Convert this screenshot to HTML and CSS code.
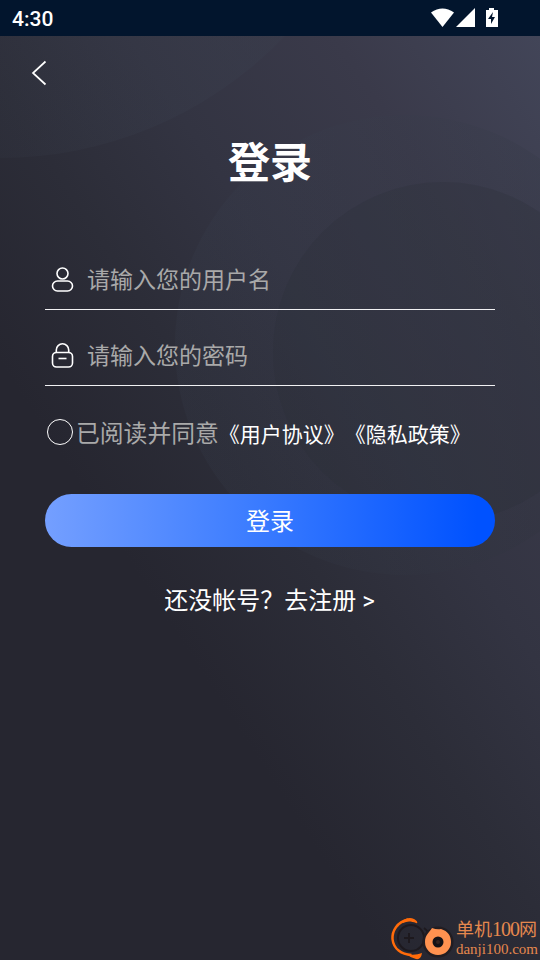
FILE: index.html
```html
<!DOCTYPE html>
<html lang="zh-CN">
<head>
<meta charset="utf-8">
<title>登录</title>
<link rel="stylesheet" href="styles.css">
</head>
<body>
<header class="status">
  <span class="clock">4:30</span>
  <svg class="status-icons" width="68" height="20" viewBox="0 0 68 20" fill="#fff"><path d="M0 4.4Q11.5-3.6 23 4.4L11.5 19Z"/><path d="M44 0V19H25Z"/><path d="M58 0h5v2h4v17H55V2h3Z"/><path d="m62 4-5 7h3v5l4-7h-3Z" fill="#02152d"/></svg>
</header>
<main class="page">
  <svg class="backdrop" viewBox="0 0 540 924" aria-hidden="true">
    <defs><linearGradient id="halo" x1="0" y1="0.4" x2="1" y2="0.6"><stop offset="0" stop-color="#3c4455" stop-opacity=".16"/><stop offset=".5" stop-color="#353b48" stop-opacity=".18"/><stop offset="1" stop-color="#2b2f38" stop-opacity=".25"/></linearGradient>
    <linearGradient id="wave" x1="0" x2="1"><stop offset=".5" stop-color="#3d4452" stop-opacity=".12"/><stop offset=".9" stop-color="#3a3f4e" stop-opacity=".35"/></linearGradient></defs>
    <circle fill="url(#wave)" cx="0" cy="-272" r="394"/>
    <circle fill="url(#halo)" cx="405" cy="309" r="230"/>
    <circle class="shade" cx="443" cy="316" r="170"/>
  </svg>
  <nav class="nav"><svg class="back" width="16" height="26" viewBox="0 0 16 26"><path d="M14.500 1.500 2 13l12.500 11.500"/></svg></nav>
  <h1 class="title">登录</h1>
  <form class="form">
    <label class="field">
      <svg class="icon" width="24" height="26" viewBox="0 0 24 26"><circle cx="11.500" cy="6.500" r="5.500"/><rect x="1.500" y="14" width="20" height="10" rx="5"/></svg>
      <span class="hint">请输入您的用户名</span>
    </label>
    <label class="field">
      <svg class="icon" width="24" height="26" viewBox="0 0 24 26"><path d="M5.300 9.500V7a6.200 6.200 0 0 1 12.400 0v2.500"/><rect x="1.500" y="9.500" width="20" height="14.500" rx="4"/><path d="M7.500 15.500h8"/></svg>
      <span class="hint">请输入您的密码</span>
    </label>
    <div class="agree"><span class="radio"></span><span class="agree-text">已阅读并同意</span><a class="policy">《用户协议》</a><a class="policy">《隐私政策》</a></div>
    <button class="submit" type="button">登录</button>
  </form>
  <a class="register">还没帐号？去注册 &gt;</a>
  <div class="brand">
    <svg class="logo" width="64" height="44" viewBox="0 0 64 44"><circle cx="21" cy="22" r="13" class="ring"/><path class="ring" d="M14 22h10M19 17v10M34 12q6 4 6 14"/><path class="arc" d="M18 3.500C7 6 2 15 2.500 23c1 10 9 15.500 19 16"/><path d="M11 6q7-6 13-3c4 2 4 5 2 4-5-2-9-2-13 0ZM16 38q9 2 16-1-1 7-6 6-5-1-10-5Z" fill="#ff6b0a"/><circle cx="48" cy="26" r="15.500" fill="#211d22"/><path d="M42 12q5 2 9 1c7 2 10 7 10 13a13 13 0 1 1-26 0c0-7 4-9 7-14Z" fill="#ff9250"/><circle cx="48" cy="26" r="5.500" fill="#141216"/><circle cx="48" cy="26" r="2" fill="#33231f"/></svg>
    <div class="brand-copy"><span class="brand-name">单机<span class="digits">100</span>网</span><span class="brand-url">danji100.com</span></div>
  </div>
</main>
</body>
</html>
```
FILE: styles.css
```css
* { box-sizing: border-box; }
body {
  margin: 0;
  width: 540px;
  height: 960px;
  overflow: hidden;
  display: flex;
  flex-direction: column;
  color: #fff;
  font-family: Roboto, "Noto Sans CJK SC", sans-serif;
}
.status {
  height: 36px;
  flex: none;
  display: flex;
  align-items: center;
  justify-content: space-between;
  padding: 0 41px 0 12px;
  background: #02152d;
}
.clock { font: 500 21px/36px Roboto, sans-serif; padding-top: 2px; }
.status-icons { margin-top: -1px; }
.page {
  position: relative;
  flex: 1;
  display: flex;
  flex-direction: column;
  background: linear-gradient(237deg, #424558 0%, #3a3a4a 18%, #333442 36%, #2c2d38 50%, #262630 66%, #262630 100%);
}
.backdrop { position: absolute; inset: 0; width: 540px; height: 924px; }
.shade { fill: #2b2e38; opacity: .24; }
.nav, .title, .form, .register { position: relative; }
.nav { height: 74px; padding: 24px 31px; }
.back, .icon { display: block; fill: none; stroke: #fff; stroke-width: 1.7; }
.title { margin: 19px 0 0; height: 62px; text-align: center; font-family: "Noto Sans CJK SC", sans-serif; font-size: 42px; line-height: 61px; font-weight: 700; }
.form { margin: 59px 45px 0; }
.field { display: flex; align-items: center; height: 60px; border-bottom: 1px solid #f1f1f3; padding-left: 6px; }
.field + .field { margin-top: 16px; }
.icon { stroke-width: 1.6; }
.hint { margin: -4px 0 0 12px; color: #a9a9a9; font-family: "Noto Sans CJK SC", sans-serif; font-size: 23px; line-height: 34px; }
.agree { display: flex; align-items: center; height: 40px; margin: 26px 0 0 2px; white-space: nowrap; font-family: "Noto Sans CJK SC", sans-serif; }
.radio { width: 26px; height: 26px; border: 1.4px solid #fff; border-radius: 50%; margin-right: 3px; }
.agree-text { font-size: 23.8px; line-height: 34px; color: #a9a9a9; }
.policy { font-size: 21px; margin-top: 2px; }
.submit {
  display: block;
  width: 100%;
  height: 53px;
  margin-top: 42px;
  border: 0;
  border-radius: 27px;
  background: linear-gradient(90deg, #749fff, #3d7dff 45%, #0052ff 96%);
  color: #fff;
  font: 400 24px/51px "Noto Sans CJK SC", sans-serif;
  padding: 0 0 2px;
}
.register { margin: 36px 1px 0 0; text-align: center; font-size: 24px; line-height: 36px; }
.brand { position: absolute; right: 2px; bottom: 0; display: flex; align-items: center; }
.logo { display: block; }
.ring { fill: none; stroke: #1d191e; stroke-width: 2; }
.arc { fill: none; stroke: #ff6b0a; stroke-width: 2.5; }
.brand-copy { display: flex; flex-direction: column; color: #e5884e; margin-left: 2px; font-family: "Liberation Serif", "Noto Sans CJK SC", serif; }
.brand-name { font-size: 18px; line-height: 21px; white-space: nowrap; }
.digits { font-size: 20px; letter-spacing: -1px; }
.brand-url { font-size: 15px; line-height: 16px; }
```
